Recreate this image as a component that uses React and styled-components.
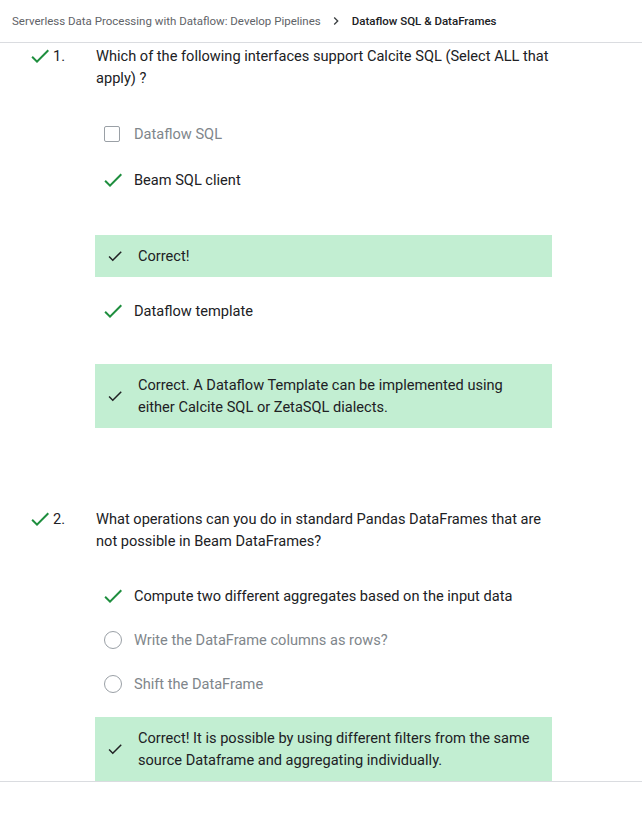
import styled, { createGlobalStyle } from "styled-components";

const GlobalStyle = createGlobalStyle`
  html, body {
    margin: 0;
    padding: 0;
    background: #ffffff;
  }
  body {
    font-family: Roboto, "Liberation Sans", Arial, sans-serif;
    color: #202124;
    -webkit-font-smoothing: antialiased;
  }
`;

// Datos del quiz
const preguntas = [
  {
    numero: 1,
    alto: 46,
    texto: "Which of the following interfaces support Calcite SQL (Select ALL that apply) ?",
    items: [
      { tipo: "opcion", marca: "checkbox", texto: "Dataflow SQL" },
      { tipo: "opcion", marca: "check", texto: "Beam SQL client" },
      { tipo: "feedback", texto: "Correct!", espacio: 32 },
      { tipo: "opcion", marca: "check", texto: "Dataflow template", espacio: 11 },
      {
        tipo: "feedback",
        texto: "Correct. A Dataflow Template can be implemented using either Calcite SQL or ZetaSQL dialects.",
        espacio: 30,
      },
    ],
  },
  {
    numero: 2,
    alto: 44,
    texto: "What operations can you do in standard Pandas DataFrames that are not possible in Beam DataFrames?",
    items: [
      { tipo: "opcion", marca: "check", texto: "Compute two different aggregates based on the input data" },
      { tipo: "opcion", marca: "radio", texto: "Write the DataFrame columns as rows?" },
      { tipo: "opcion", marca: "radio", texto: "Shift the DataFrame" },
      {
        tipo: "feedback",
        texto: "Correct! It is possible by using different filters from the same source Dataframe and aggregating individually.",
        espacio: 11,
      },
    ],
  },
];

function CheckIcon({ size = 24, color = "#1e8e3e" }) {
  return (
    <svg width={size} height={size} viewBox="0 0 24 24" fill={color}>
      <path d="M9 16.17L4.83 12l-1.42 1.41L9 19 21 7l-1.41-1.41z" />
    </svg>
  );
}

function Marca({ tipo }) {
  if (tipo === "checkbox") return <Checkbox />;
  if (tipo === "radio") return <Radio />;
  return <CheckIcon />;
}

export default function App() {
  return (
    <>
      <GlobalStyle />
      <Page>
        <Breadcrumb>
          <Crumb>Serverless Data Processing with Dataflow: Develop Pipelines</Crumb>
          <Chevron viewBox="0 0 24 24">
            <path d="M10 6L8.59 7.41 13.17 12l-4.58 4.59L10 18l6-6z" />
          </Chevron>
          <CrumbActual>Dataflow SQL &amp; DataFrames</CrumbActual>
        </Breadcrumb>

        <Quiz>
          {preguntas.map((p, i) => (
            <Question key={p.numero} $first={i === 0}>
              <QuestionHead>
                <CheckIcon />
                <Numero>{p.numero}.</Numero>
              </QuestionHead>
              <Content>
                <QuestionText>{p.texto}</QuestionText>
                <Items>
                  {p.items.map((item, j) =>
                    item.tipo === "opcion" ? (
                      <Option
                        key={j}
                        $alto={p.alto}
                        $espacio={item.espacio || 0}
                        $apagada={item.marca !== "check"}
                      >
                        <MarkSlot>
                          <Marca tipo={item.marca} />
                        </MarkSlot>
                        <span>{item.texto}</span>
                      </Option>
                    ) : (
                      <Feedback key={j} $espacio={item.espacio}>
                        <FeedbackIcon>
                          <CheckIcon size={18} color="#202124" />
                        </FeedbackIcon>
                        <FeedbackText>{item.texto}</FeedbackText>
                      </Feedback>
                    )
                  )}
                </Items>
              </Content>
            </Question>
          ))}
        </Quiz>
        <Footer />
      </Page>
    </>
  );
}

const Page = styled.div`
  width: 642px;
  min-height: 828px;
  display: flex;
  flex-direction: column;
`;

const Breadcrumb = styled.div`
  height: 42px;
  display: flex;
  align-items: center;
  padding-left: 12px;
  border-bottom: 1px solid #dadce0;
  font-size: 11.5px;
`;

const Crumb = styled.span`
  color: #5f6368;
`;

const Chevron = styled.svg`
  width: 16px;
  height: 16px;
  fill: #3c4043;
  margin: 0 8px 0 7px;
`;

const CrumbActual = styled.span`
  color: #202124;
  font-weight: 500;
`;

const Quiz = styled.div`
  display: flex;
  flex-direction: column;
`;

const Question = styled.div`
  display: grid;
  grid-template-columns: 95px 457px;
  margin-top: ${({ $first }) => ($first ? "2px" : "80px")};
`;

const QuestionHead = styled.div`
  display: flex;
  align-items: center;
  padding-left: 28px;
  height: 22px;
  font-size: 14.6px;
`;

const Numero = styled.span`
  margin-left: 1px;
  color: #202124;
`;

const Content = styled.div`
  display: flex;
  flex-direction: column;
`;

const QuestionText = styled.div`
  font-size: 14.6px;
  line-height: 22px;
  color: #202124;
  padding-left: 1px;
  margin-right: -8px;
`;

const Items = styled.div`
  display: flex;
  flex-direction: column;
  margin-top: 22px;
`;

const Option = styled.div`
  display: flex;
  align-items: center;
  height: ${({ $alto }) => $alto}px;
  margin-top: ${({ $espacio }) => $espacio}px;
  padding-left: 6px;
  gap: 9px;
  font-size: 14.6px;
  color: ${({ $apagada }) => ($apagada ? "#80868b" : "#202124")};
`;

const MarkSlot = styled.div`
  width: 24px;
  height: 24px;
  display: flex;
  align-items: center;
  justify-content: center;
`;

const Checkbox = styled.div`
  width: 14px;
  height: 14px;
  border: 1px solid #9aa0a6;
  border-radius: 2px;
  margin-left: -2px;
`;

const Radio = styled.div`
  width: 16px;
  height: 16px;
  border: 1px solid #9aa0a6;
  border-radius: 50%;
`;

const Feedback = styled.div`
  display: flex;
  align-items: center;
  background: #c2eed2;
  padding: 10px 14px 10px 11px;
  margin-top: ${({ $espacio }) => $espacio}px;
  gap: 14px;
  font-size: 14.6px;
  color: #202124;
`;

const FeedbackIcon = styled.div`
  width: 18px;
  height: 18px;
  flex-shrink: 0;
  display: flex;
`;

const FeedbackText = styled.div`
  line-height: 22px;
`;

const Footer = styled.div`
  border-top: 1px solid #dadce0;
  flex: 1;
`;
